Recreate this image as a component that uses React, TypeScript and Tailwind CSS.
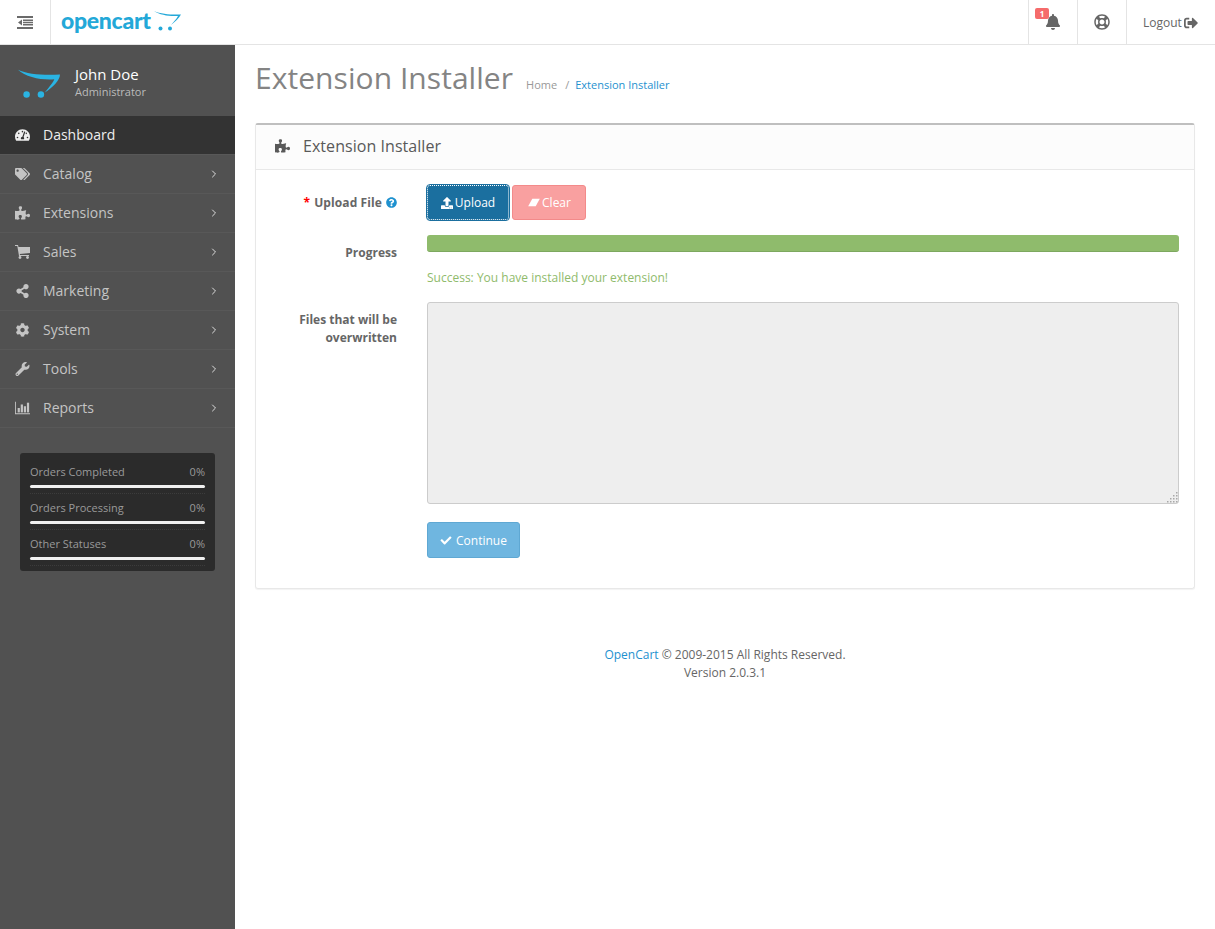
import { ChevronRight } from "lucide-react";
import {
  FaBell,
  FaCheck,
  FaCog,
  FaPuzzlePiece,
  FaQuestionCircle,
  FaRegLifeRing,
  FaShareAlt,
  FaSignOutAlt,
  FaTachometerAlt,
  FaTags,
  FaUpload,
  FaWrench,
} from "react-icons/fa";

function MenuIcon({ className }: { className?: string }) {
  return (
    <svg viewBox="0 0 16 13" className={className} fill="currentColor">
      <rect x="0" y="0" width="16" height="2" />
      <rect x="6" y="3.5" width="10" height="1.5" />
      <rect x="6" y="5.75" width="10" height="1.5" />
      <rect x="6" y="8" width="10" height="1.5" />
      <rect x="0" y="11" width="16" height="2" />
      <path d="M5 3.5 V9.5 L1 6.5 Z" />
    </svg>
  );
}

function CartIcon({ className }: { className?: string }) {
  return (
    <svg viewBox="0 0 15 14" className={className} fill="currentColor">
      <path d="M0 0 H3 L3.5 2 H15 V8 L4.8 9 L5 10 H14 V11 H4 L2.3 1 H0 Z" />
      <circle cx="5" cy="12.5" r="1.4" />
      <circle cx="12.5" cy="12.5" r="1.4" />
    </svg>
  );
}

function ChartIcon({ className }: { className?: string }) {
  return (
    <svg viewBox="0 0 17 14" className={className} fill="currentColor">
      <path d="M0 0 H1 V13 H17 V14 H0 Z" />
      <rect x="3" y="7" width="2.5" height="5" />
      <rect x="6.5" y="3" width="2.5" height="9" />
      <rect x="10" y="5" width="2.5" height="7" />
      <rect x="13.5" y="1" width="2.5" height="11" />
    </svg>
  );
}

const menu = [
  { label: "Catalog", icon: FaTags },
  { label: "Extensions", icon: FaPuzzlePiece },
  { label: "Sales", icon: CartIcon },
  { label: "Marketing", icon: FaShareAlt },
  { label: "System", icon: FaCog },
  { label: "Tools", icon: FaWrench },
  { label: "Reports", icon: ChartIcon },
];

const stats = ["Orders Completed", "Orders Processing", "Other Statuses"];

function CartMark({ className }: { className?: string }) {
  return (
    <svg viewBox="0 0 44 30" className={className}>
      <path d="M0 0 C10 5 28 6 44 5 C44 11 36 19 28 24 C33 18 37 13 38 10 C25 11 8 8 0 0 Z" fill="#2ab4e3" />
      <circle cx="9" cy="26" r="3.4" fill="#2ab4e3" />
      <circle cx="24" cy="26" r="3.4" fill="#2ab4e3" />
    </svg>
  );
}

function LogoCart({ className }: { className?: string }) {
  return (
    <svg viewBox="0 0 28 21" className={className}>
      <path d="M0 0 C7 3 18 4 27 3.5 C25 7 21 11 17 14 C20 10.5 22.5 8 24 5 C15 5.5 6 4 0 0 Z" fill="#23a8d8" />
      <circle cx="6.5" cy="17.5" r="2" fill="#23a8d8" />
      <circle cx="16" cy="17.5" r="2" fill="#23a8d8" />
    </svg>
  );
}

function EraserIcon({ className }: { className?: string }) {
  return (
    <svg viewBox="0 0 14 12" className={className} fill="currentColor">
      <path d="M5 1 H14 L9 10 H0 Z" />
    </svg>
  );
}

function ResizeDots() {
  const dots = [
    [10, 0], [7, 3], [10, 3], [4, 6], [7, 6], [10, 6], [1, 9], [4, 9], [7, 9], [10, 9],
  ];
  return (
    <svg viewBox="0 0 12 11" className="absolute bottom-[1px] right-[1px] h-[11px] w-[12px]">
      {dots.map(([x, y]) => (
        <rect key={`${x}-${y}`} x={x} y={y} width="1.5" height="1.5" fill="#a8a8a8" />
      ))}
    </svg>
  );
}

export default function App() {
  return (
    <div className="flex min-h-[929px] flex-col bg-white font-['Open_Sans',sans-serif] text-[12px] leading-[18px] text-[#666666]">
      <header className="flex h-[45px] items-stretch border-b border-[#e4e4e4]">
        <div className="flex w-[51px] items-center justify-center border-r border-[#e4e4e4]">
          <MenuIcon className="mt-[1px] h-[13px] w-[16px] text-[#6a6a6a]" />
        </div>
        <div className="flex items-center pl-[10px]">
          <span className="mt-[-3px] font-['Lato',sans-serif] text-[23px] font-black leading-none tracking-[-0.3px] text-[#23a8d8]">
            opencart
          </span>
          <LogoCart className="ml-[3px] mt-[-2px] h-[21px] w-[28px]" />
        </div>
        <div className="ml-auto flex items-stretch">
          <div className="relative flex w-[49px] items-center justify-center border-l border-[#e4e4e4]">
            <FaBell className="h-[16px] w-[16px] text-[#666666]" />
            <span className="absolute left-[6px] top-[8px] flex h-[11px] w-[14px] items-center justify-center rounded-[2px] bg-[#f56b6b] text-[8px] font-bold leading-none text-white">
              1
            </span>
          </div>
          <div className="flex w-[49px] items-center justify-center border-l border-[#e4e4e4]">
            <FaRegLifeRing className="mr-[1px] h-[16px] w-[16px] text-[#666666]" />
          </div>
          <div className="flex w-[89px] items-center gap-[2px] border-l border-[#e4e4e4] pl-[16px] pt-[2px]">
            <span>Logout</span>
            <FaSignOutAlt className="h-[14px] w-[14px]" />
          </div>
        </div>
      </header>

      <div className="flex flex-1">
        <aside className="w-[235px] shrink-0 bg-[#515151]">
          <div className="flex h-[71px] items-center pl-[18px]">
            <CartMark className="mt-[6px] h-[30px] w-[42px]" />
            <div className="ml-[15px] mt-[1px]">
              <div className="text-[15px] leading-[20px] text-white">John Doe</div>
              <div className="text-[11px] leading-[15px] text-[#bbbbbb]">Administrator</div>
            </div>
          </div>
          <nav>
            <div className="flex h-[39px] items-center border-b border-[#585858] bg-[#333333] pl-[15px] text-[14px] text-[#eeeeee]">
              <FaTachometerAlt className="h-[14px] w-[15px]" />
              <span className="ml-[13px]">Dashboard</span>
            </div>
            {menu.map((item) => (
              <div
                key={item.label}
                className="flex h-[39px] items-center border-b border-[#585858] pl-[15px] pr-[15px] text-[14px] text-[#c4c4c4]"
              >
                <item.icon className="h-[14px] w-[15px]" />
                <span className="ml-[13px]">{item.label}</span>
                <ChevronRight className="ml-auto h-[12px] w-[12px] text-[#dddddd]" strokeWidth={2} />
              </div>
            ))}
          </nav>
          <div className="mx-[20px] mt-[25px] rounded-[3px] bg-[#2b2b2b] px-[10px] py-[5px]">
            {stats.map((label) => (
              <div key={label} className="border-b border-dotted border-[#3c3c3c] py-[5px]">
                <div className="flex justify-between text-[11px] leading-[18px] text-[#9a9a9a]">
                  <span>{label}</span>
                  <span>0%</span>
                </div>
                <div className="mt-[4px] h-[3px] rounded-[2px] bg-[#f0f0f0]" />
              </div>
            ))}
          </div>
        </aside>

        <main className="min-w-0 flex-1 px-[20px]">
          <div className="flex items-end pt-[13px]">
            <h1 className="text-[30px] font-normal leading-[40px] tracking-[0.05px] text-[#848484]">Extension Installer</h1>
            <div className="mb-[4px] ml-[13px] flex items-center text-[11px] text-[#999999]">
              <span>Home</span>
              <span className="ml-[8px] mr-[6px] text-[#999999]">/</span>
              <span className="text-[#1e91cf]">Extension Installer</span>
            </div>
          </div>

          <section className="mt-[25px] rounded-[3px] border border-t-2 border-[#e8e8e8] border-t-[#bfbfbf] shadow-[0_1px_1px_rgba(0,0,0,0.05)]">
            <div className="flex h-[45px] items-center border-b border-[#e8e8e8] bg-[#fcfcfc] pb-[2px] pl-[19px]">
              <FaPuzzlePiece className="h-[14px] w-[15px] text-[#595959]" />
              <h3 className="ml-[13px] text-[16px] tracking-[0.05px] text-[#595959]">Extension Installer</h3>
            </div>
            <div className="px-[15px] pb-[30px] pt-[15px]">
              <div className="grid grid-cols-[126px_minmax(0,1fr)] gap-x-[30px]">
                <label className="flex h-[35px] items-center justify-end font-bold tracking-[0.1px]">
                  <span className="mr-[4px] text-[#ff0000]">*</span>
                  Upload File
                  <FaQuestionCircle className="ml-[4px] h-[11px] w-[11px] text-[#1e91cf]" />
                </label>
                <div className="flex gap-[3px]">
                  <button className="flex h-[35px] w-[82px] items-center justify-center gap-[2px] rounded-[3px] border border-dotted border-white bg-[#1b6f9f] text-white outline outline-1 outline-[#1b6f9f]">
                    <FaUpload className="h-[12px] w-[12px]" />
                    Upload
                  </button>
                  <button className="flex h-[35px] w-[74px] items-center justify-center gap-[1px] rounded-[3px] border border-[#f38a8a] bg-[#f9a0a0] text-white">
                    <EraserIcon className="h-[10px] w-[14px]" />
                    Clear
                  </button>
                </div>

                <label className="mt-[15px] flex h-[36px] items-center justify-end font-bold">Progress</label>
                <div className="mt-[15px]">
                  <div className="h-[17px] rounded-[3px] border-b border-[#7da85f] bg-[#8fbb6c]" />
                  <div className="mt-[17px] text-[#8fbb6c]">Success: You have installed your extension!</div>
                </div>

                <label className="mt-[15px] pt-[9px] text-right font-bold">
                  Files that will be
                  <br />
                  overwritten
                </label>
                <div className="relative mt-[15px]">
                  <textarea
                    disabled
                    className="block h-[202px] w-full resize-none rounded-[3px] border border-[#cccccc] bg-[#eeeeee]"
                  />
                  <ResizeDots />
                </div>

                <div />
                <div className="mt-[18px]">
                  <button className="flex h-[36px] w-[93px] items-center justify-center gap-[4px] rounded-[3px] border border-[#5fa8d3] bg-[#6fb6e0] pt-[1px] text-white">
                    <FaCheck className="h-[11px] w-[12px]" />
                    Continue
                  </button>
                </div>
              </div>
            </div>
          </section>

          <footer className="mt-[57px] text-center">
            <span className="text-[#1e91cf]">OpenCart</span> © 2009-2015 All Rights Reserved.
            <br />
            Version 2.0.3.1
          </footer>
        </main>
      </div>
    </div>
  );
}
